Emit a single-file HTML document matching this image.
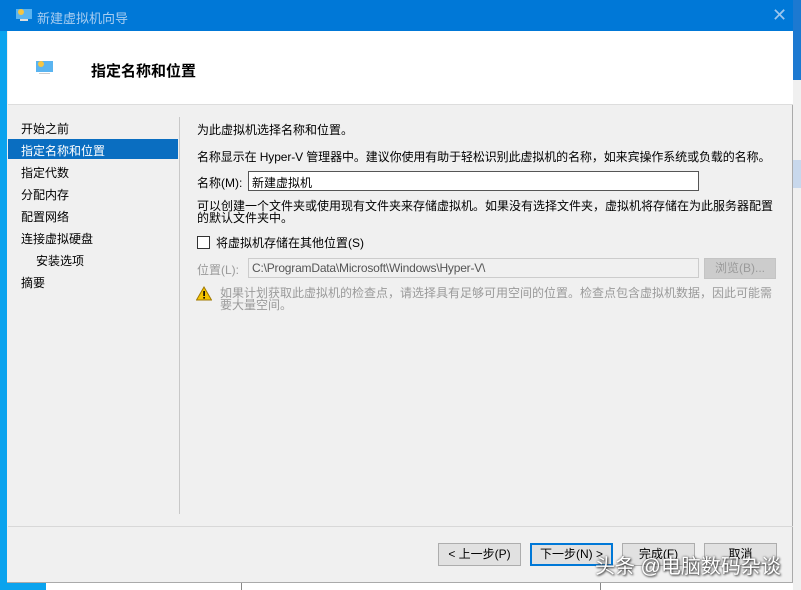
<!DOCTYPE html>
<html><head><meta charset="utf-8"><style>
*{margin:0;padding:0;box-sizing:border-box}
body{width:801px;height:590px;position:relative;overflow:hidden;background:#fff;font-family:"Liberation Sans","Noto Sans CJK SC","Microsoft YaHei",sans-serif;font-size:12px;color:#000}
.a{position:absolute;white-space:nowrap}
.nav{position:absolute;left:21px;font-size:12px}
.btn{position:absolute;top:543px;height:23px;background:#e1e1e1;border:1px solid #adadad;text-align:center;line-height:21px;font-size:12px}
</style></head><body>
<div class="a" style="left:0;top:0;width:8px;height:590px;background:#0aa3ee"></div>
<div class="a" style="top:583px;left:0;width:46px;height:7px;background:#0aa3ee"></div>
<div class="a" style="left:793px;top:0;width:8px;height:590px;background:#f0f0f0"></div>
<div class="a" style="left:793px;top:0;width:8px;height:80px;background:#1c79d1"></div>
<div class="a" style="left:793px;top:160px;width:8px;height:28px;background:#c8d8ec"></div>
<div class="a" style="left:241px;top:583px;width:1px;height:7px;background:#888"></div>
<div class="a" style="left:600px;top:583px;width:1px;height:7px;background:#888"></div>
<div class="a" style="left:7px;top:0;width:786px;height:583px;background:#f0f0f0;border-bottom:1px solid #aaa;border-right:1px solid #aaa"></div>
<div class="a" style="left:0;top:0;width:793px;height:31px;background:#0078d7"></div>
<svg class="a" style="left:16px;top:8px" width="16" height="14"><rect x="0" y="1" width="16" height="10" fill="#5ab4f0"/><circle cx="5" cy="4" r="3" fill="#f5c542"/><rect x="4" y="11" width="8" height="2" fill="#ddd"/></svg>
<div class="a" style="left:37px;top:8px;color:#a8cdf0;font-size:13px">新建虚拟机向导</div>
<div class="a" style="left:772px;top:5px;color:#9cc6ee;font-size:18px">✕</div>
<div class="a" style="left:8px;top:31px;width:785px;height:74px;background:#fff;border-bottom:1px solid #ddd"></div>
<svg class="a" style="left:36px;top:60px" width="17" height="15"><rect x="0" y="1" width="17" height="11" fill="#5ab4f0"/><circle cx="5" cy="4" r="3" fill="#f5c542"/><rect x="3" y="13" width="11" height="1" fill="#ccc"/></svg>
<div class="a" style="left:91px;top:60px;font-size:15px;font-weight:bold">指定名称和位置</div>
<div class="a" style="left:8px;top:139px;width:170px;height:20px;background:#0a6ec1"></div>
<div class="nav" style="top:120px">开始之前</div>
<div class="nav" style="top:142px;color:#fff">指定名称和位置</div>
<div class="nav" style="top:164px">指定代数</div>
<div class="nav" style="top:186px">分配内存</div>
<div class="nav" style="top:208px">配置网络</div>
<div class="nav" style="top:230px">连接虚拟硬盘</div>
<div class="nav" style="top:252px;left:36px">安装选项</div>
<div class="nav" style="top:274px">摘要</div>
<div class="a" style="left:179px;top:117px;width:1px;height:397px;background:#c8c8c8"></div>
<div class="a" style="left:8px;top:526px;width:785px;height:1px;background:#d8d8d8"></div>
<div class="a" style="left:197px;top:121px">为此虚拟机选择名称和位置。</div>
<div class="a" style="left:197px;top:148px;letter-spacing:-0.1px">名称显示在 Hyper-V 管理器中。建议你使用有助于轻松识别此虚拟机的名称，如来宾操作系统或负载的名称。</div>
<div class="a" style="left:197px;top:174px">名称(M):</div>
<div class="a" style="left:248px;top:171px;width:451px;height:20px;background:#fff;border:1px solid #555;padding:2px 3px">新建虚拟机</div>
<div class="a" style="left:197px;top:200px;line-height:12px">可以创建一个文件夹或使用现有文件夹来存储虚拟机。如果没有选择文件夹，虚拟机将存储在为此服务器配置<br>的默认文件夹中。</div>
<div class="a" style="left:197px;top:236px;width:13px;height:13px;border:1px solid #333;background:#fff"></div>
<div class="a" style="left:216px;top:234px">将虚拟机存储在其他位置(S)</div>
<div class="a" style="left:197px;top:261px;color:#9a9a9a">位置(L):</div>
<div class="a" style="left:248px;top:258px;width:451px;height:20px;background:#f0f0f0;border:1px solid #ccc;padding:2px 3px;color:#555;letter-spacing:-0.2px">C:\ProgramData\Microsoft\Windows\Hyper-V\</div>
<div class="a" style="left:704px;top:258px;width:72px;height:21px;background:#ccc;border:1px solid #c4c4c4;text-align:center;line-height:19px;color:#9a9a9a">浏览(B)...</div>
<svg class="a" style="left:196px;top:286px" width="16" height="15"><path d="M8 1L15.5 14H0.5Z" fill="#f5c400" stroke="#a07800"/><rect x="7.3" y="5" width="1.6" height="5" fill="#000"/><rect x="7.3" y="11" width="1.6" height="1.6" fill="#000"/></svg>
<div class="a" style="left:220px;top:287px;line-height:12px;color:#9a9a9a">如果计划获取此虚拟机的检查点，请选择具有足够可用空间的位置。检查点包含虚拟机数据，因此可能需<br>要大量空间。</div>
<div class="btn" style="left:438px;width:83px">&lt; 上一步(P)</div>
<div class="btn" style="left:530px;width:83px;border:2px solid #0078d7;line-height:19px">下一步(N) &gt;</div>
<div class="btn" style="left:622px;width:73px">完成(F)</div>
<div class="btn" style="left:704px;width:73px">取消</div>
<div class="a" style="left:595px;top:550px;font-size:20px;color:#fff;text-shadow:1px 1px 2px #333,0 0 2px #555">头条 @电脑数码杂谈</div>
</body></html>
